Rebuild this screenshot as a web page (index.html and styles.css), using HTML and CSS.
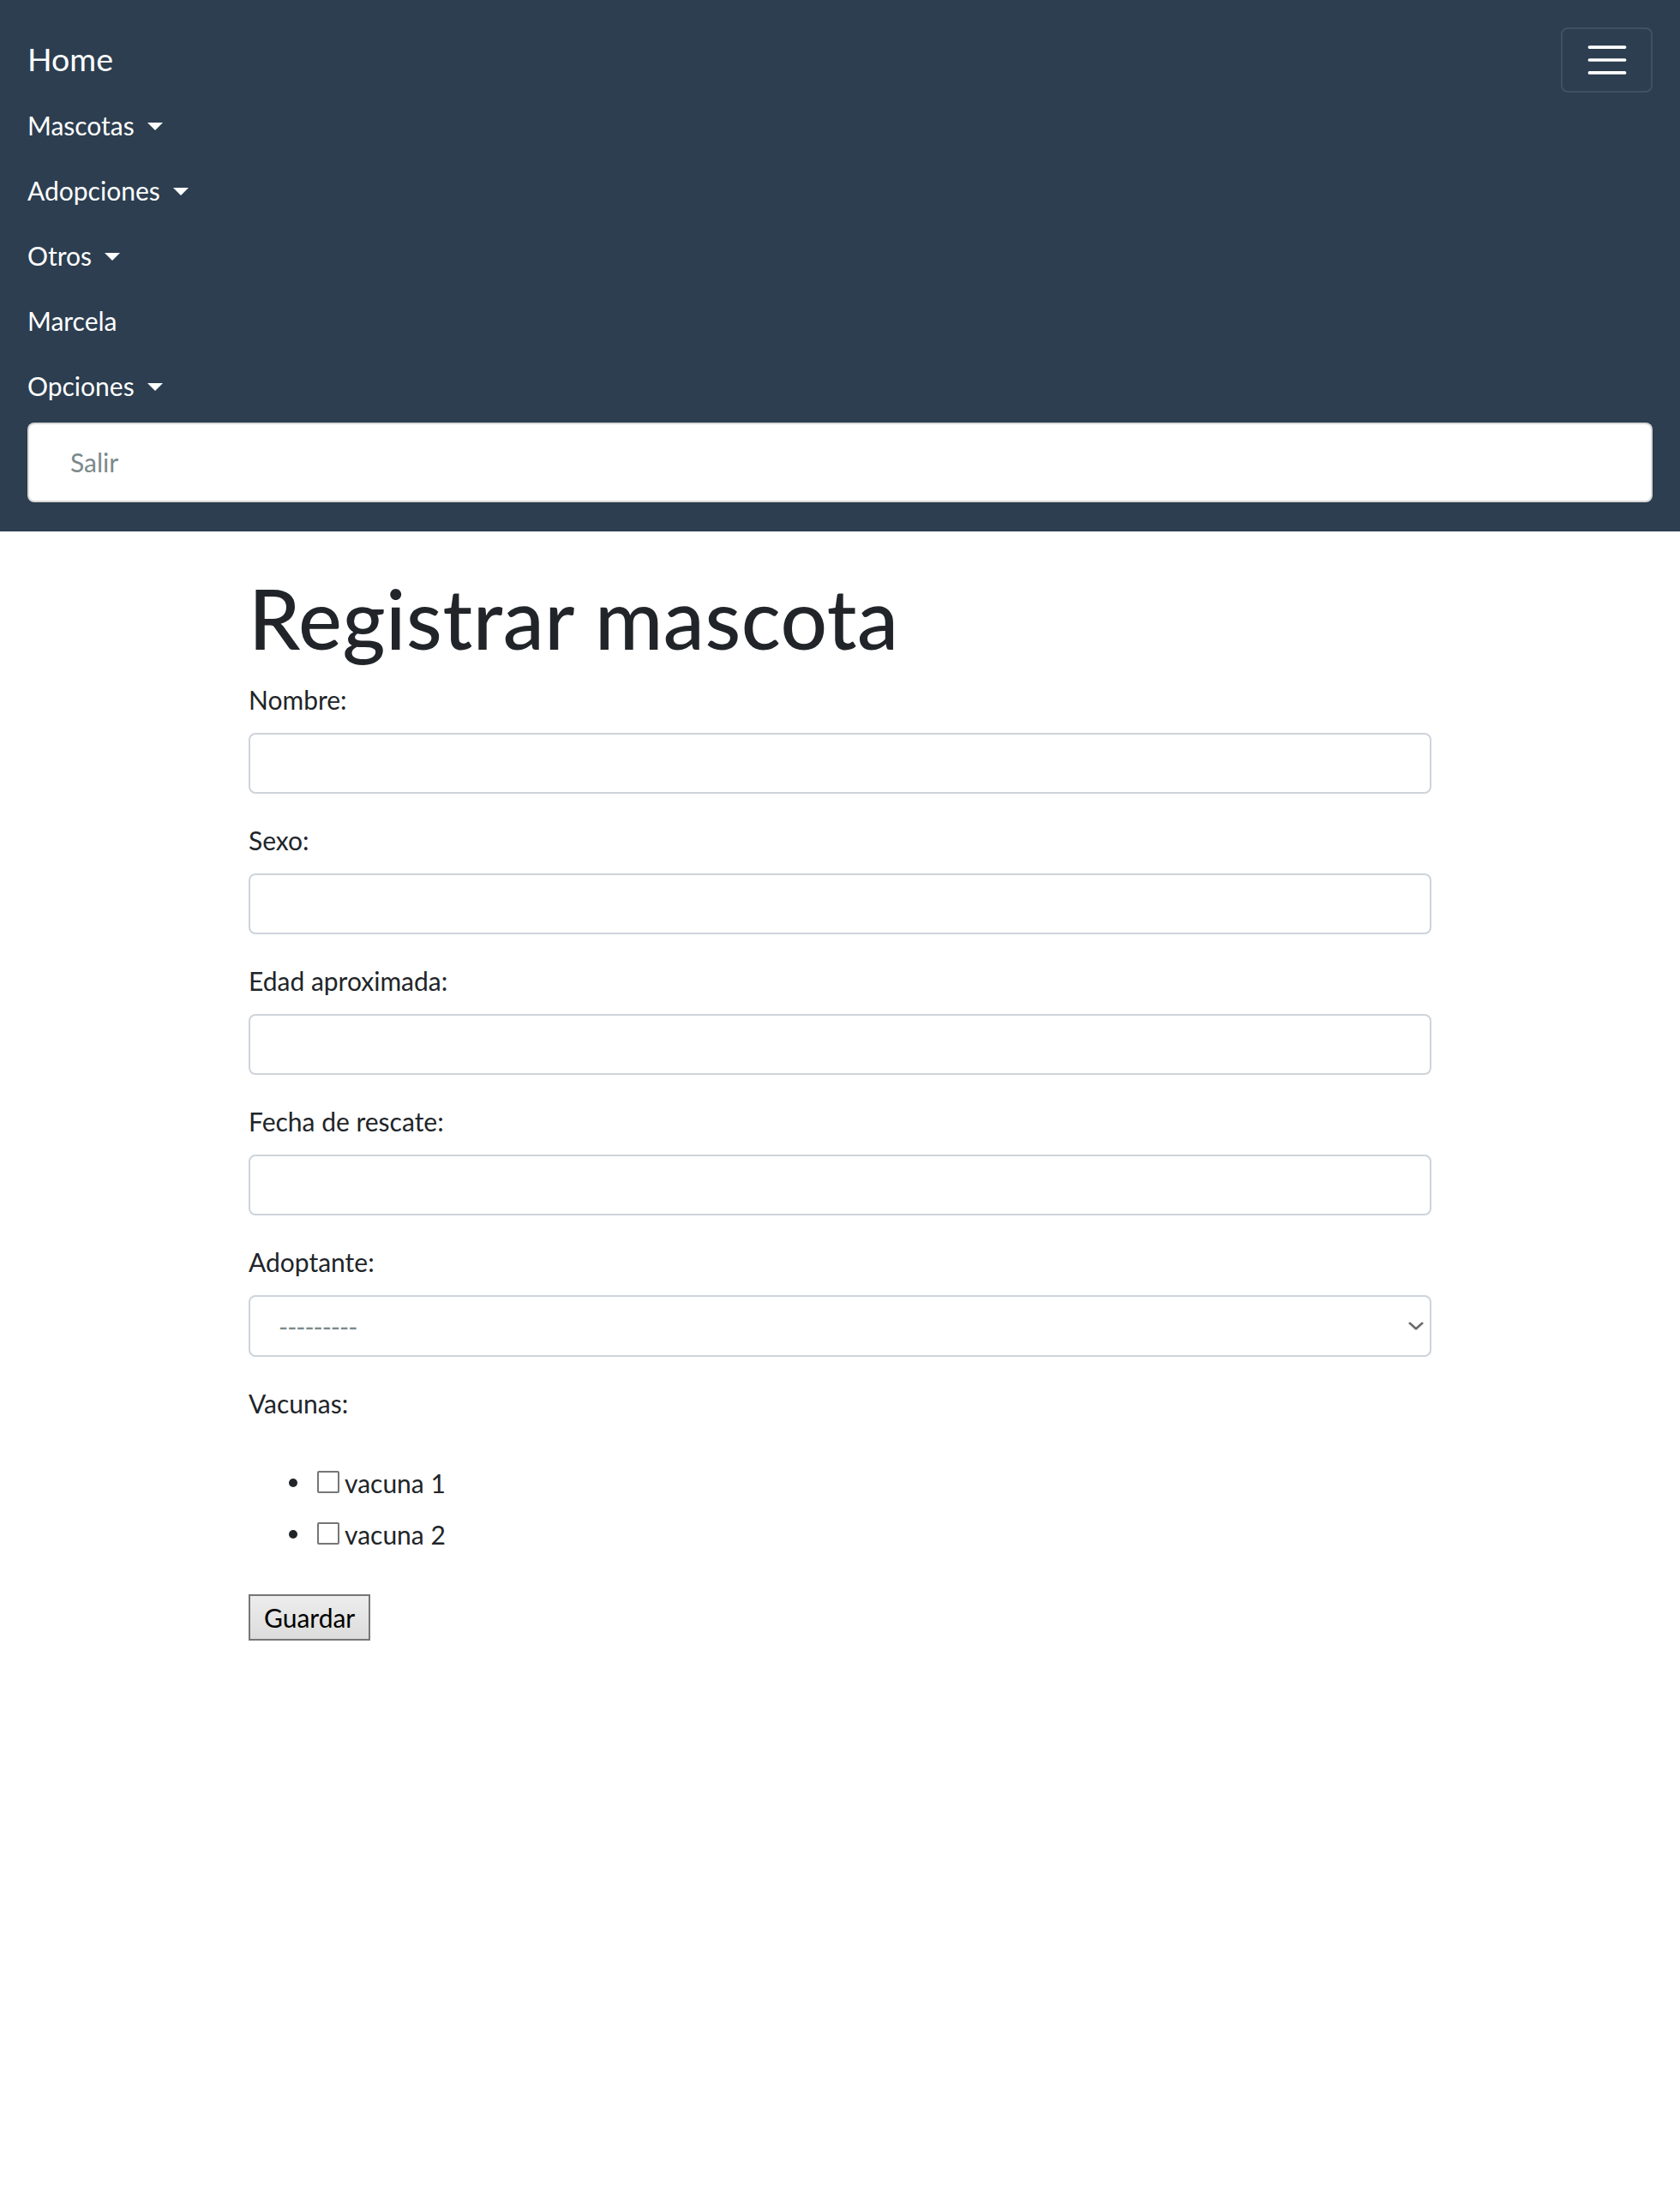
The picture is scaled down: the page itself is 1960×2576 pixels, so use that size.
FILE: index.html
```html
<!DOCTYPE html>
<html lang="es">
<head>
<meta charset="utf-8">
<title>Registrar mascota</title>
<link rel="stylesheet" href="styles.css">
</head>
<body>
<nav class="navbar">
  <div class="navbar-top">
    <a class="brand" href="#">Home</a>
    <button class="toggler" type="button" aria-label="Menú">
      <svg class="toggler-icon" viewBox="0 0 30 30" width="56" height="56"><path d="M4 7h22M4 15h22M4 23h22" stroke="#ffffff" stroke-width="2" stroke-linecap="round" fill="none"/></svg>
    </button>
  </div>
  <ul class="nav-list">
    <li><a class="nav-link caret" href="#">Mascotas</a></li>
    <li><a class="nav-link caret" href="#">Adopciones</a></li>
    <li><a class="nav-link caret" href="#">Otros</a></li>
    <li><a class="nav-link" href="#">Marcela</a></li>
    <li><a class="nav-link caret" href="#">Opciones</a></li>
  </ul>
  <div class="dropdown-menu">
    <a class="dropdown-item" href="#">Salir</a>
  </div>
</nav>

<main class="container">
  <h1 class="title">Registrar mascota</h1>
  <form class="form">
    <p class="field"><label class="label" for="id_nombre">Nombre:</label><input class="control" type="text" id="id_nombre"></p>
    <p class="field"><label class="label" for="id_sexo">Sexo:</label><input class="control" type="text" id="id_sexo"></p>
    <p class="field"><label class="label" for="id_edad">Edad aproximada:</label><input class="control" type="text" id="id_edad"></p>
    <p class="field"><label class="label" for="id_fecha">Fecha de rescate:</label><input class="control" type="text" id="id_fecha"></p>
    <p class="field"><label class="label" for="id_adoptante">Adoptante:</label>
      <span class="select-wrap">
        <select class="control select" id="id_adoptante"><option>---------</option></select>
        <svg class="select-arrow" viewBox="0 0 20 10" width="18" height="10"><path d="M2 1.5l8 7 8-7" stroke="#6b6b6b" stroke-width="3" fill="none" stroke-linecap="round" stroke-linejoin="round"/></svg>
      </span>
    </p>
    <p class="field"><label class="label">Vacunas:</label></p>
    <ul class="checks">
      <li class="check-item"><label class="check-label"><input class="checkbox" type="checkbox">vacuna 1</label></li>
      <li class="check-item"><label class="check-label"><input class="checkbox" type="checkbox">vacuna 2</label></li>
    </ul>
    <button class="save" type="submit">Guardar</button>
  </form>
</main>
</body>
</html>
```

FILE: styles.css
```css
* { box-sizing: border-box; }

body {
  margin: 0;
  font-family: Lato, "Open Sans", "Liberation Sans", sans-serif;
  font-size: 30px;
  line-height: 45px;
  color: #212529;
  background: #ffffff;
}

a { text-decoration: none; }

/* Navbar */
.navbar {
  background: #2c3e50;
  padding: 32px 32px 34px 32px;
}

.navbar-top {
  display: flex;
  justify-content: space-between;
  align-items: center;
  height: 76px;
}

.brand {
  color: #ffffff;
  font-size: 37.5px;
  line-height: 55px;
  padding: 9px 0 12px;
}

.toggler {
  width: 107px;
  height: 76px;
  padding: 0;
  display: flex;
  align-items: center;
  justify-content: center;
  background: transparent;
  border: 2px solid rgba(255, 255, 255, 0.1);
  border-radius: 8px;
}

.toggler-icon { display: block; }

.nav-list {
  list-style: none;
  margin: 0;
  padding: 0;
}

.nav-link {
  display: block;
  color: #ffffff;
  padding: 16px 0;
  line-height: 44px;
}

.caret::after {
  content: "";
  display: inline-block;
  margin-left: 15px;
  vertical-align: 6px;
  border-top: 9px solid #ffffff;
  border-right: 9px solid transparent;
  border-left: 9px solid transparent;
  border-bottom: 0;
}

.dropdown-menu {
  margin-top: 5px;
  background: #ffffff;
  border: 2px solid rgba(0, 0, 0, 0.15);
  border-radius: 8px;
  padding: 22px 0;
}

.dropdown-item {
  display: block;
  padding: 0 48px;
  line-height: 45px;
  color: #7b8a8b;
}

/* Content */
.container {
  width: 1380px;
  margin: 0 auto;
  padding-top: 43px;
}

.title {
  margin: 0 0 16px;
  font-size: 96px;
  line-height: 1.2;
  font-weight: 500;
  letter-spacing: 0.6px;
  color: #212529;
}

.form { margin: 0; }

.field {
  display: flow-root;
  margin: 0 0 32px;
}

.label {
  display: block;
  margin-bottom: 16px;
}

.control {
  display: block;
  width: 100%;
  height: 71px;
  margin: 0;
  padding: 0 24px;
  font-family: inherit;
  font-size: 30px;
  color: #495057;
  background: #ffffff;
  border: 2px solid #ced4da;
  border-radius: 8px;
}

.select-wrap {
  display: block;
  position: relative;
}

.select {
  height: 72px;
  padding-left: 33px;
  color: #7b8a8b;
  letter-spacing: -1px;
  -webkit-appearance: none;
  appearance: none;
}

.select-arrow {
  position: absolute;
  right: 9px;
  top: 31px;
}

.checks {
  margin: 0 0 32px;
  padding-left: 0;
  list-style: none;
}

.check-item {
  padding-bottom: 15px;
  line-height: 45px;
}

.check-item::before {
  content: "";
  display: inline-block;
  width: 10px;
  height: 10px;
  margin: 0 23px 7px 47px;
  border-radius: 50%;
  background: #212529;
}

.check-label { display: inline-block; }

.checkbox {
  -webkit-appearance: none;
  appearance: none;
  display: inline-block;
  vertical-align: baseline;
  width: 26px;
  height: 26px;
  margin: 0 6px 0 0;
  border: 2px solid #767676;
  border-radius: 2px;
  background: #ffffff;
}

.save {
  display: block;
  height: 54px;
  margin: 0;
  padding: 0 16px;
  font-family: inherit;
  font-size: 30px;
  line-height: 45px;
  color: #000000;
  background: linear-gradient(#ededed, #dcdcdc);
  border: 2px solid #767676;
  border-radius: 0;
}
```
